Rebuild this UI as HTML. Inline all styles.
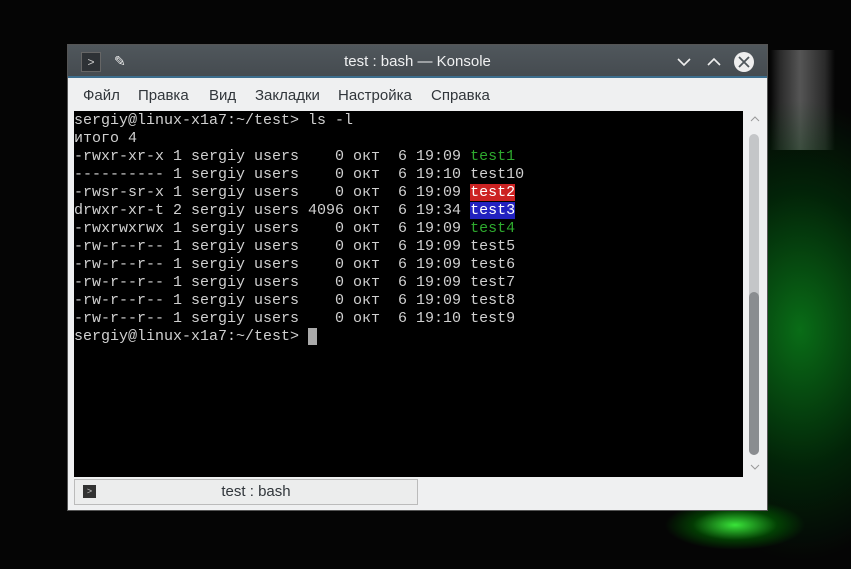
<!DOCTYPE html>
<html><head><meta charset="utf-8"><style>
*{margin:0;padding:0;box-sizing:border-box}
body{width:851px;height:569px;overflow:hidden;position:relative;font-family:"Liberation Sans","DejaVu Sans",sans-serif;
background:
radial-gradient(ellipse 70px 25px at 735px 525px,rgba(60,240,60,.95),rgba(0,140,0,.4) 60%,transparent),
radial-gradient(ellipse 150px 230px at 800px 330px,rgba(10,120,25,.9),rgba(0,60,10,.55) 60%,transparent),
linear-gradient(90deg,transparent 770px,#2a2a2a 780px,#555 800px,#2a2a2a 825px,transparent 835px) 0 50px/851px 100px no-repeat,
#050505;}
.win{position:absolute;left:67px;top:44px;width:701px;height:467px;background:#eff0f1;border:1px solid #555}
.title{position:absolute;left:0;top:0;width:100%;height:33px;background:linear-gradient(#50575c,#454b50);border-bottom:2px solid #3d6e8e;color:#eff0f1;font-size:15px;text-align:center;line-height:33px}
.menu{position:absolute;left:0;top:35px;height:32px;width:100%;font-size:15px;color:#31363b}
.menu span{position:absolute;top:7px}
.term{position:absolute;left:6px;top:66px;width:669px;height:366px;background:#000;font-family:"Liberation Mono",monospace;font-size:15px;line-height:18px;color:#d0d0d0;padding:1px 0 0 0;white-space:pre}
.g{color:#2eaa2e}.r{background:#c22;color:#fff}.b{background:#2222c0;color:#fff}
.sb{position:absolute;left:675px;top:66px;width:25px;height:366px}
.tab{position:absolute;left:6px;top:434px;width:344px;height:26px;border:1px solid #bbb;background:#eceded;font-size:15px;color:#31363b;text-align:center;line-height:24px;padding-left:20px}
</style></head><body>
<div class="win">
<div class="title">test : bash — Konsole
<div style="position:absolute;left:13px;top:7px;width:20px;height:20px;background:#2e3236;border:1px solid #666;color:#ccc;font-size:12px;line-height:18px">&gt;</div>
<div style="position:absolute;left:46px;top:0;color:#eee;font-size:14px">✎</div>
<svg style="position:absolute;left:608px;top:9px" width="16" height="16"><path d="M2 5l6 6 6-6" stroke="#eee" stroke-width="1.6" fill="none"/></svg>
<svg style="position:absolute;left:638px;top:9px" width="16" height="16"><path d="M2 11l6-6 6 6" stroke="#eee" stroke-width="1.6" fill="none"/></svg>
<svg style="position:absolute;left:665px;top:6px" width="22" height="22"><circle cx="11" cy="11" r="10" fill="#eee"/><path d="M6 6l10 10M16 6L6 16" stroke="#50575c" stroke-width="1.8"/></svg>
</div>
<div class="menu"><span style="left:15px">Файл</span><span style="left:70px">Правка</span><span style="left:141px">Вид</span><span style="left:187px">Закладки</span><span style="left:270px">Настройка</span><span style="left:363px">Справка</span></div>
<div class="term">sergiy@linux-x1a7:~/test&gt; ls -l
итого 4
-rwxr-xr-x 1 sergiy users    0 окт  6 19:09 <span class="g">test1</span>
---------- 1 sergiy users    0 окт  6 19:10 test10
-rwsr-sr-x 1 sergiy users    0 окт  6 19:09 <span class="r">test2</span>
drwxr-xr-t 2 sergiy users 4096 окт  6 19:34 <span class="b">test3</span>
-rwxrwxrwx 1 sergiy users    0 окт  6 19:09 <span class="g">test4</span>
-rw-r--r-- 1 sergiy users    0 окт  6 19:09 test5
-rw-r--r-- 1 sergiy users    0 окт  6 19:09 test6
-rw-r--r-- 1 sergiy users    0 окт  6 19:09 test7
-rw-r--r-- 1 sergiy users    0 окт  6 19:09 test8
-rw-r--r-- 1 sergiy users    0 окт  6 19:10 test9
sergiy@linux-x1a7:~/test&gt; <span style="background:#aaa"> </span></div>
<div class="sb">
<svg style="position:absolute;left:6px;top:4px" width="12" height="8"><path d="M2 6l4-4 4 4" stroke="#999" fill="none"/></svg>
<div style="position:absolute;left:6px;top:23px;width:10px;height:321px;border-radius:5px;background:#c4c6c8"></div>
<div style="position:absolute;left:6px;top:181px;width:10px;height:163px;border-radius:5px;background:#8a8d90"></div>
<svg style="position:absolute;left:6px;top:352px" width="12" height="8"><path d="M2 2l4 4 4-4" stroke="#999" fill="none"/></svg>
</div>
<div class="tab">test : bash
<div style="position:absolute;left:8px;top:5px;width:13px;height:13px;background:#333;color:#ccc;font-size:9px;line-height:13px">&gt;</div>
</div>
</div>
</body></html>
